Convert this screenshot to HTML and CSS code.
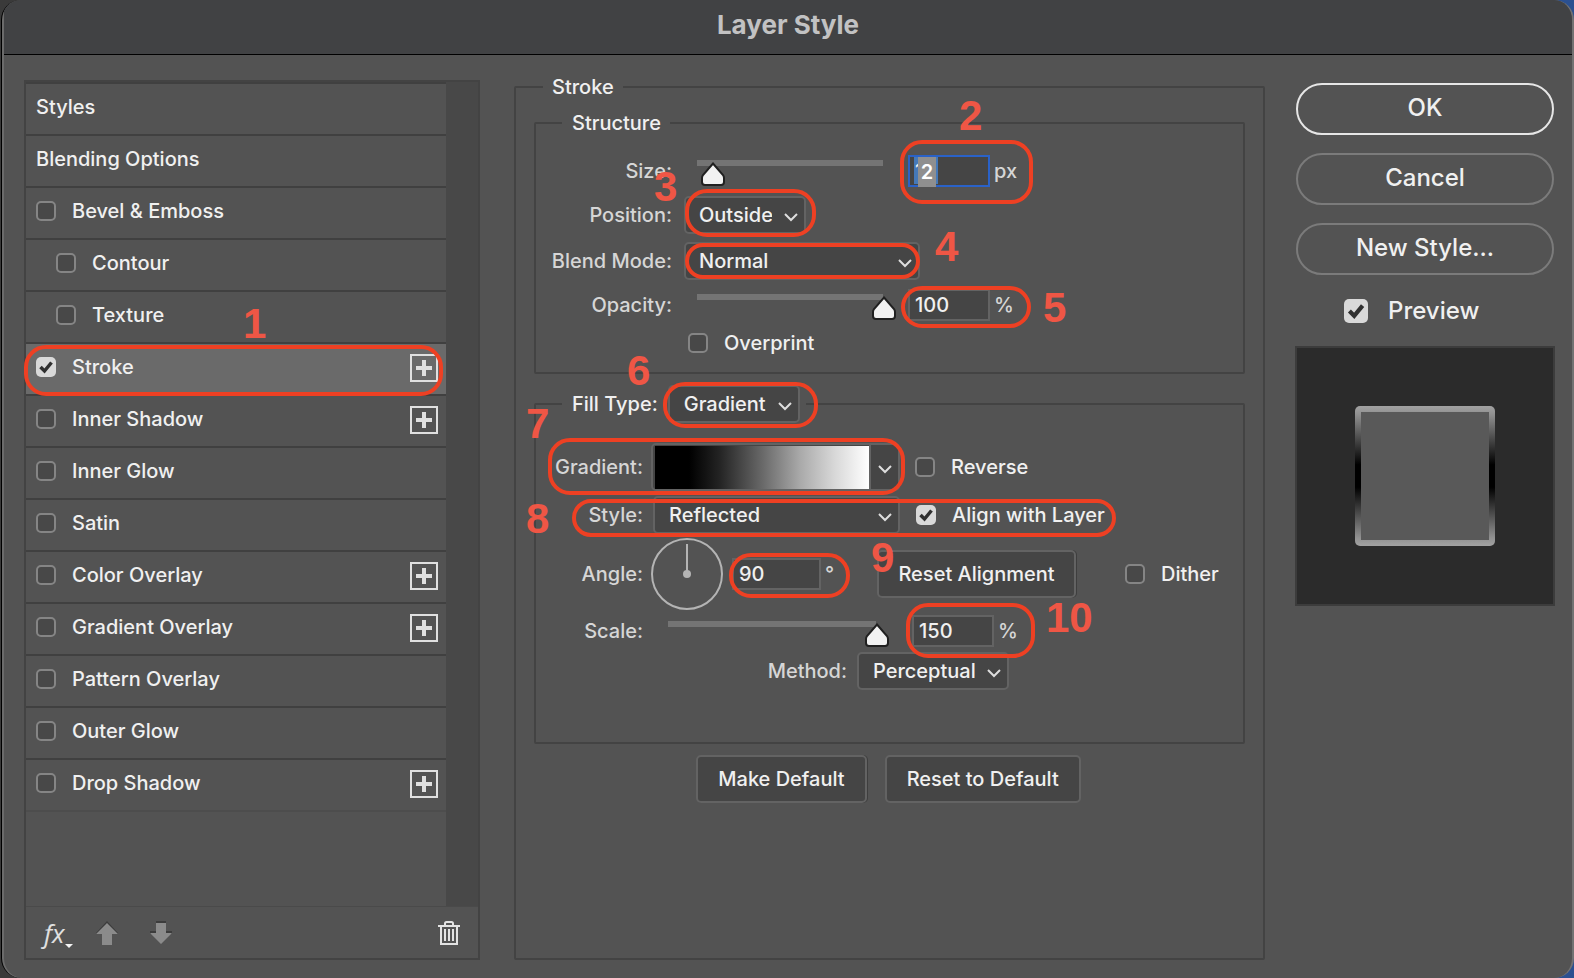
FILE: index.html
```html
<!DOCTYPE html>
<html lang="en">
<head>
<meta charset="utf-8">
<title>Layer Style</title>
<link rel="stylesheet" href="styles.css">
</head>
<body>
<div class="dialog" role="dialog" aria-labelledby="dialog-title">
  <header class="titlebar"><h1 class="title" id="dialog-title">Layer Style</h1></header>
  <div class="content">
    <nav class="sidebar" aria-label="Styles">
      <div class="sidebar-body">
        <ul class="list">
          <li class="row"><span class="row-label">Styles</span></li>
          <li class="row"><span class="row-label">Blending Options</span></li>
          <li class="row"><label class="row-label"><input class="check" type="checkbox">Bevel &amp; Emboss</label></li>
          <li class="row row-nested"><label class="row-label"><input class="check" type="checkbox">Contour</label></li>
          <li class="row row-nested"><label class="row-label"><input class="check" type="checkbox">Texture</label></li>
          <li class="row row-active"><label class="row-label"><input class="check" type="checkbox" checked>Stroke</label><button class="add" type="button" aria-label="Add Stroke"></button></li>
          <li class="row"><label class="row-label"><input class="check" type="checkbox">Inner Shadow</label><button class="add" type="button" aria-label="Add Inner Shadow"></button></li>
          <li class="row"><label class="row-label"><input class="check" type="checkbox">Inner Glow</label></li>
          <li class="row"><label class="row-label"><input class="check" type="checkbox">Satin</label></li>
          <li class="row"><label class="row-label"><input class="check" type="checkbox">Color Overlay</label><button class="add" type="button" aria-label="Add Color Overlay"></button></li>
          <li class="row"><label class="row-label"><input class="check" type="checkbox">Gradient Overlay</label><button class="add" type="button" aria-label="Add Gradient Overlay"></button></li>
          <li class="row"><label class="row-label"><input class="check" type="checkbox">Pattern Overlay</label></li>
          <li class="row"><label class="row-label"><input class="check" type="checkbox">Outer Glow</label></li>
          <li class="row row-last"><label class="row-label"><input class="check" type="checkbox">Drop Shadow</label><button class="add" type="button" aria-label="Add Drop Shadow"></button></li>
        </ul>
        <div class="scroll-gutter"></div>
      </div>
      <div class="sidebar-footer">
        <button class="tool tool-fx" type="button" aria-label="Effects">fx<svg class="caret" width="8" height="4" viewBox="0 0 8 4"><path d="M0 0H8L4 4Z" fill="#f4f4f4"/></svg></button>
        <button class="tool tool-up" type="button" aria-label="Move effect up"><svg width="24" height="24" viewBox="0 0 24 24"><path d="M12 0L1 12V13H7V23H17V13H23V12Z" fill="#3c3c3c"/><path d="M12 2L1 13H7V24H17V13H23Z" fill="#8b8b8b"/></svg></button>
        <button class="tool tool-down" type="button" aria-label="Move effect down"><svg width="24" height="24" viewBox="0 0 24 24"><path d="M7 0H17V10H23V13H1V10H7Z" fill="#3c3c3c"/><path d="M7 2H17V12H23L12 23L1 12H7Z" fill="#8b8b8b"/></svg></button>
        <button class="tool tool-trash" type="button" aria-label="Delete effect"><svg width="22" height="24" viewBox="0 0 22 24" fill="none" stroke="#e2e2e2" stroke-width="2"><path d="M0 5H22M7 4V2.500Q7 1 8.500 1H13.500Q15 1 15 2.500V4M3 5V23H19V5M7 8V20M11 8V20M15 8V20"/></svg></button>
      </div>
      <span class="ring ring-1"></span><span class="mark mark-1">1</span>
    </nav>

    <main class="main">
      <fieldset class="group group-outer">
        <legend class="legend">Stroke</legend>
        <fieldset class="group structure">
          <legend class="legend legend-inner">Structure</legend>
          <div class="field">
            <label class="name" for="size">Size:</label>
            <input class="slider" type="range" min="0" max="1000" value="90" aria-label="Size slider">
            <span class="edit"><input class="number number-focus" id="size" type="text" value="12"><span class="edit-overlay">2</span></span>
            <span class="unit">px</span>
          </div>
          <div class="field">
            <label class="name" for="position">Position:</label>
            <select class="select select-position" id="position"><option>Outside</option></select>
          </div>
          <div class="field field-blend">
            <label class="name" for="blend">Blend Mode:</label>
            <select class="select select-blend" id="blend"><option>Normal</option></select>
          </div>
          <div class="field field-opacity">
            <label class="name" for="opacity">Opacity:</label>
            <input class="slider" type="range" min="0" max="100" value="100" aria-label="Opacity slider">
            <input class="number" id="opacity" type="text" value="100">
            <span class="unit">%</span>
          </div>
          <div class="field field-overprint">
            <label class="option"><input class="check" type="checkbox">Overprint</label>
          </div>
        </fieldset>

        <fieldset class="group fill">
          <legend class="legend legend-inner legend-fill"><label for="filltype">Fill Type:</label><select class="select select-fill" id="filltype"><option>Gradient</option></select></legend>
          <div class="field field-gradient">
            <span class="name name-fill">Gradient:</span>
            <button class="gradient" type="button" aria-label="Gradient picker"><span class="swatch"></span><span class="gradient-arrow"><svg width="14" height="9" viewBox="0 0 14 9" fill="none" stroke="#dedede" stroke-width="2"><path d="M1 1L7 7L13 1"/></svg></span></button>
            <label class="option option-reverse"><input class="check" type="checkbox">Reverse</label>
          </div>
          <div class="field field-style">
            <label class="name name-fill" for="style">Style:</label>
            <select class="select select-style" id="style"><option>Reflected</option></select>
            <label class="option option-align"><input class="check" type="checkbox" checked>Align with Layer</label>
          </div>
          <div class="field field-angle">
            <label class="name name-fill" for="angle">Angle:</label>
            <svg class="dial" width="72" height="72" viewBox="0 0 72 72"><circle cx="36" cy="36" r="35" fill="none" stroke="#b4b4b4" stroke-width="2"/><path d="M36 6V36" stroke="#b4b4b4" stroke-width="2"/><circle cx="36" cy="36" r="4" fill="#b4b4b4"/></svg>
            <input class="number number-angle" id="angle" type="text" value="90">
            <span class="unit unit-degree">°</span>
            <button class="button button-align" type="button">Reset Alignment</button>
            <label class="option option-dither"><input class="check" type="checkbox">Dither</label>
          </div>
          <div class="field field-scale">
            <label class="name name-fill" for="scale">Scale:</label>
            <input class="slider slider-scale" type="range" min="10" max="150" value="150" aria-label="Scale slider">
            <input class="number number-scale" id="scale" type="text" value="150">
            <span class="unit">%</span>
          </div>
          <div class="field field-method">
            <label class="name name-method" for="method">Method:</label>
            <select class="select select-method" id="method"><option>Perceptual</option></select>
          </div>
        </fieldset>

        <div class="defaults">
          <button class="button button-ruled" type="button">Make Default</button>
          <button class="button" type="button">Reset to Default</button>
        </div>
      </fieldset>

      <span class="ring ring-2"></span><span class="mark mark-2">2</span>
      <span class="ring ring-3"></span><span class="mark mark-3">3</span>
      <span class="ring ring-4"></span><span class="mark mark-4">4</span>
      <span class="ring ring-5"></span><span class="mark mark-5">5</span>
      <span class="ring ring-6"></span><span class="mark mark-6">6</span>
      <span class="ring ring-7"></span><span class="mark mark-7">7</span>
      <span class="ring ring-8"></span><span class="mark mark-8">8</span>
      <span class="ring ring-9"></span><span class="mark mark-9">9</span>
      <span class="ring ring-10"></span><span class="mark mark-10">10</span>
    </main>

    <aside class="actions">
      <button class="pill pill-primary" type="button">OK</button>
      <button class="pill" type="button">Cancel</button>
      <button class="pill" type="button">New Style...</button>
      <label class="preview-toggle"><input class="check check-large" type="checkbox" checked>Preview</label>
      <div class="preview"><div class="preview-stroke"><div class="preview-fill"></div></div></div>
    </aside>
  </div>
</div>
</body>
</html>
```
FILE: styles.css
```css
* { box-sizing: border-box; }

body {
  margin: 0;
  background: linear-gradient(to right, #3a3a3a 50%, #2b5090 50%);
  color: #f0f0f0;
  font: 500 20px/24px Inter, Roboto, sans-serif;
}

button, input, select { font: inherit; color: inherit; }

.dialog {
  display: flex;
  flex-direction: column;
  min-height: 100vh;
  margin-left: 1px;
  overflow: hidden;
  background: #535353;
  border-left: 1px solid #000;
  border-right: 2px solid #727272;
  border-radius: 20px;
  box-shadow: inset 2px 0 #6b6b6b;
}

.titlebar {
  display: flex;
  align-items: center;
  justify-content: center;
  height: 55px;
  margin-left: 2px;
  padding-bottom: 4px;
  background: #414244;
  border-bottom: 1px solid #000;
}

.title { margin: 0; color: #c2c2c3; font-size: 26px; font-weight: 700; line-height: 30px; }

.content {
  flex: 1;
  display: grid;
  grid-template-columns: 456px minmax(751px, 1fr) 260px;
  padding: 0 17px 18px 22px;
}

/* Style list */
.sidebar {
  position: relative;
  display: flex;
  flex-direction: column;
  margin-top: 25px;
  border: 2px solid #434343;
}
.sidebar-body { flex: 1; display: flex; }
.list { flex: 1; margin: 0; padding: 0; list-style: none; border-top: 2px solid #404040; }
.scroll-gutter { width: 32px; background: #484848; }
.row {
  display: flex;
  align-items: center;
  justify-content: space-between;
  height: 52px;
  padding: 0 8px 2px 10px;
  border-bottom: 2px solid #404040;
}
.row-nested { padding-left: 30px; }
.row-active { background: #6a6a6a; }
.row-last { border-color: #4d4d4d; }
.row-label { display: flex; align-items: center; gap: 16px; padding-bottom: 2px; }

.check {
  appearance: none;
  flex: none;
  width: 20px;
  height: 20px;
  margin: 0;
  background: #484848;
  border: 2px solid #858585;
  border-radius: 5px;
}
.check:checked {
  background: #d9d9d9 url("data:image/svg+xml,%3Csvg xmlns='http://www.w3.org/2000/svg' viewBox='0 0 20 20'%3E%3Cpath d='M4.500 10L8.500 14L15.500 5.500' fill='none' stroke='%23303030' stroke-width='3.500'/%3E%3C/svg%3E") center / 100% no-repeat;
  background-origin: border-box;
  border-color: transparent;
}
.check-large { width: 24px; height: 24px; }

.add {
  width: 28px;
  height: 28px;
  padding: 0;
  border: 2px solid #e0e0e0;
  background:
    linear-gradient(#e0e0e0, #e0e0e0) center / 16px 4px no-repeat,
    linear-gradient(#e0e0e0, #e0e0e0) center / 4px 16px no-repeat;
}

.sidebar-footer {
  display: flex;
  align-items: center;
  height: 52px;
  padding: 0 18px 0 18px;
  border-top: 1px solid #4a4a4a;
}
.tool { display: flex; padding: 0; border: 0; background: none; }
.tool-fx {
  align-items: flex-end;
  width: 32px;
  margin-right: 19px;
  color: #e0e0e0;
  font: italic 400 26px/30px "Open Sans", sans-serif;
}
.tool-up { margin-right: 30px; }
.tool-trash { margin-left: auto; }

/* Settings */
.main { position: relative; display: flex; margin: 20px 30px 0 34px; }
.group { min-width: 0; margin: 0; padding: 0; border: 2px solid #434343; border-radius: 2px; }
.group-outer { flex: 1; padding: 12px 18px 0; }
.legend { margin-left: 0; padding: 0 9px; }
.group-outer > .legend { margin-left: 9px; }
.legend-inner { margin-left: 26px; padding: 0 9px 0 10px; }
.legend-fill { display: flex; align-items: center; gap: 10px; padding-right: 6px; }
.structure { padding: 14px 0 11px; }
.fill { margin-top: 11px; padding: 20px 0 52px; }

.field { display: flex; align-items: center; height: 44px; }
.field-blend { height: 48px; }
.field-opacity { height: 40px; }
.field-overprint { height: 36px; padding-left: 152px; }
.field-gradient { height: 48px; margin-bottom: 6px; }
.field-style { height: 36px; margin-bottom: 5px; }
.field-angle { height: 72px; }
.field-scale { height: 42px; }
.field-method { height: 38px; }

.name { flex: none; width: 136px; margin-right: 12px; color: #d6d6d6; text-align: right; }
.name-fill { width: 107px; margin-right: 8px; }
.name-method { width: 311px; margin-right: 10px; }
.unit { margin-left: 4px; color: #d6d6d6; }
.option { display: flex; align-items: center; gap: 16px; white-space: nowrap; }
.option-reverse { margin-left: 15px; }
.option-align { margin-left: 16px; }
.option-dither { margin-left: 49px; }

.select {
  appearance: none;
  height: 38px;
  padding: 0 32px 0 13px;
  background: #454545 url("data:image/svg+xml,%3Csvg xmlns='http://www.w3.org/2000/svg' width='14' height='9'%3E%3Cpath d='M1 1L7 7L13 1' fill='none' stroke='%23dedede' stroke-width='2'/%3E%3C/svg%3E") right 6px top 15px no-repeat;
  border: 2px solid #636363;
  border-radius: 5px;
}
.select-position { width: 122px; }
.select-blend { width: 236px; }
.select-fill { width: 132px; padding-left: 14px; }
.select-style { width: 247px; margin-left: 2px; padding-left: 14px; }
.select-method { width: 152px; padding-left: 14px; }

.number {
  width: 82px;
  height: 32px;
  padding: 0 5px;
  background: #454545;
  border: 2px solid #636363;
}
.slider + .number, .edit { margin-left: 12px; }
.number-angle { width: 89px; margin-left: 9px; }
.slider + .number-scale { margin-left: 23px; }
.number-focus {
  border-color: #2a62c8;
  background: linear-gradient(#4579b8, #4579b8) 4px 0 / 24px 27px no-repeat #454545;
}
.edit { position: relative; display: flex; }
.edit-overlay {
  position: absolute;
  left: 10px;
  top: 2px;
  width: 18px;
  height: 30px;
  background: #8f8f8f;
  color: #fff;
  font-weight: 600;
  line-height: 30px;
  text-align: center;
}

.slider {
  appearance: none;
  width: 212px;
  height: 26px;
  margin: 4px 0 0;
  background: linear-gradient(#747474, #747474) center top / calc(100% - 26px) 6px no-repeat;
}
.slider-scale { width: 234px; margin: 6px 0 0 4px; }
.slider::-webkit-slider-runnable-track { height: 26px; }
.slider::-webkit-slider-thumb {
  appearance: none;
  width: 24px;
  height: 24px;
  margin-top: 2px;
  background: url("data:image/svg+xml,%3Csvg xmlns='http://www.w3.org/2000/svg' width='24' height='24'%3E%3Cpath d='M12 1.500L22 13Q23 14.500 23 16V20Q23 23 20 23H4Q1 23 1 20V16Q1 14.500 2 13Z' fill='%23f2f2f2' stroke='%23202020' stroke-width='2'/%3E%3C/svg%3E") no-repeat;
}

.gradient {
  display: flex;
  width: 249px;
  height: 48px;
  padding: 0;
  background: #454545;
  border: 2px solid #636363;
  border-radius: 5px;
}
.swatch { flex: 1; margin: 1px 0 0 2px; background: linear-gradient(to right, #000 16%, #232323 30%, #686868 50%, #aaa 68%, #d8d8d8 84%, #fff); }
.gradient-arrow { display: flex; align-items: center; justify-content: center; width: 29px; padding-top: 4px; border-left: 2px solid #636363; }

.dial { flex: none; }
.unit-degree { width: 10px; }

.button {
  height: 48px;
  padding: 0 20px;
  background: #454545;
  border: 2px solid #636363;
  border-radius: 5px;
  white-space: nowrap;
}
.button-align { width: 199px; margin-left: 42px; padding: 0; }
.button-align, .button-ruled { box-shadow: 1px 0 #3e3e3e; }
.defaults { display: flex; justify-content: center; gap: 18px; margin: 11px 2px 0 0; }

/* Right column */
.actions { display: flex; flex-direction: column; align-items: center; margin-top: 28px; font-size: 24px; line-height: 28px; }
.pill {
  width: 258px;
  height: 52px;
  margin-bottom: 18px;
  padding: 0 0 3px;
  background: none;
  border: 2px solid #7b7b7b;
  border-radius: 26px;
}
.pill-primary { border-color: #e6e6e6; }
.preview-toggle { display: flex; align-items: center; align-self: flex-start; gap: 20px; margin: 4px 0 0 49px; }
.preview {
  display: flex;
  align-items: center;
  justify-content: center;
  width: 260px;
  height: 260px;
  margin-top: 21px;
  background: #2b2b2b;
  border: 2px solid #3c3c3c;
}
.preview-stroke {
  width: 140px;
  height: 140px;
  padding: 6px;
  border-radius: 5px;
  background: linear-gradient(#a2a2a2, #909090 6%, #000 42%, #000 58%, #909090 94%, #a2a2a2);
}
.preview-fill { height: 100%; background: #595959; }

/* Numbered callouts laid over the dialog */
.ring { position: absolute; border: 4px solid #ee4023; border-radius: 22px; pointer-events: none; }
.mark { position: absolute; color: #ef5645; font: bold 42px/30px "Liberation Sans", Arial, sans-serif; pointer-events: none; }
.ring-1 { left: -2px; top: 263px; width: 419px; height: 51px; }
.mark-1 { left: 217px; top: 227px; }
.ring-2 { left: 386px; top: 65px; width: 133px; height: 64px; }
.mark-2 { left: 445px; top: 26px; }
.ring-3 { left: 171px; top: 114px; width: 131px; height: 48px; }
.mark-3 { left: 140px; top: 97px; }
.ring-4 { left: 171px; top: 168px; width: 235px; height: 36px; }
.mark-4 { left: 421px; top: 157px; }
.ring-5 { left: 387px; top: 211px; width: 130px; height: 42px; }
.mark-5 { left: 529px; top: 218px; }
.ring-6 { left: 149px; top: 307px; width: 155px; height: 46px; }
.mark-6 { left: 113px; top: 281px; }
.ring-7 { left: 34px; top: 363px; width: 357px; height: 57px; }
.mark-7 { left: 12px; top: 334px; }
.ring-8 { left: 58px; top: 424px; width: 544px; height: 38px; }
.mark-8 { left: 12px; top: 429px; }
.ring-9 { left: 215px; top: 478px; width: 121px; height: 45px; }
.mark-9 { left: 357px; top: 468px; }
.ring-10 { left: 392px; top: 528px; width: 129px; height: 55px; }
.mark-10 { left: 532px; top: 528px; }
```
